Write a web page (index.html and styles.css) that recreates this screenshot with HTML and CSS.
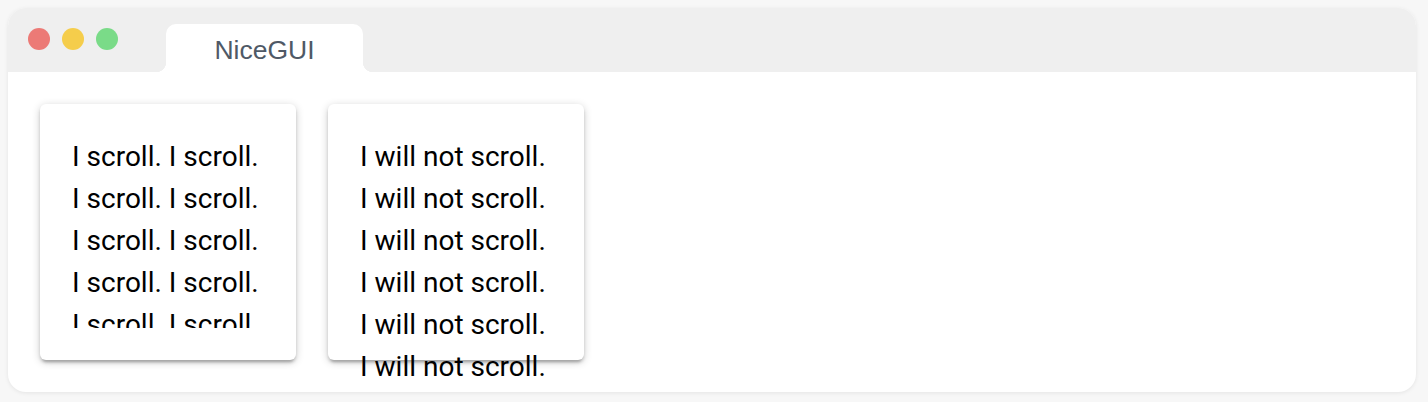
FILE: index.html
```html
<!DOCTYPE html>
<html>
<head>
<meta charset="utf-8">
<link rel="stylesheet" href="styles.css">
</head>
<body>
<div class="window">
  <div class="titlebar">
    <div class="dots">
      <span class="dot red"></span>
      <span class="dot yellow"></span>
      <span class="dot green"></span>
    </div>
    <div class="tab">NiceGUI</div>
  </div>
  <div class="content">
    <div class="card">
      <div class="scroll">
        <div class="line">I scroll. I scroll.</div>
        <div class="line">I scroll. I scroll.</div>
        <div class="line">I scroll. I scroll.</div>
        <div class="line">I scroll. I scroll.</div>
        <div class="line">I scroll. I scroll.</div>
        <div class="line">I scroll. I scroll.</div>
        <div class="line">I scroll. I scroll.</div>
        <div class="line">I scroll. I scroll.</div>
        <div class="line">I scroll. I scroll.</div>
        <div class="line">I scroll. I scroll.</div>
      </div>
    </div>
    <div class="card card-static">
      <div class="line">I will not scroll.</div>
      <div class="line">I will not scroll.</div>
      <div class="line">I will not scroll.</div>
      <div class="line">I will not scroll.</div>
      <div class="line">I will not scroll.</div>
      <div class="line">I will not scroll.</div>
    </div>
  </div>
</div>
</body>
</html>
```
FILE: styles.css
```css
html, body {
  margin: 0;
  padding: 0;
}
body {
  background: #f7f7f7;
  padding: 8px;
  font-family: Roboto, "Liberation Sans", sans-serif;
}
.window {
  width: 1408px;
  height: 384px;
  background: #ffffff;
  border-radius: 18px;
  box-shadow: 0 1px 4px rgba(0, 0, 0, 0.08);
  overflow: hidden;
}
.titlebar {
  height: 64px;
  background: #efefef;
  display: flex;
  align-items: flex-end;
}
.dots {
  display: flex;
  gap: 12px;
  align-self: flex-start;
  margin-top: 20px;
  margin-left: 20px;
}
.dot {
  width: 22px;
  height: 22px;
  border-radius: 50%;
  display: block;
}
.red { background: #ec7a76; }
.yellow { background: #f5cd4b; }
.green { background: #7adb88; }
.tab {
  position: relative;
  margin-left: 48px;
  width: 197px;
  height: 48px;
  background: #ffffff;
  border-radius: 10px 10px 0 0;
  display: flex;
  align-items: center;
  justify-content: center;
  padding-top: 5px;
  box-sizing: border-box;
  font-family: "Liberation Sans", Arial, sans-serif;
  font-size: 26.5px;
  color: #4f5966;
}
.tab::before,
.tab::after {
  content: "";
  position: absolute;
  bottom: 0;
  width: 10px;
  height: 10px;
}
.tab::before {
  left: -10px;
  background: radial-gradient(circle at 0 0, transparent 10px, #ffffff 10.5px);
}
.tab::after {
  right: -10px;
  background: radial-gradient(circle at 100% 0, transparent 10px, #ffffff 10.5px);
}
.content {
  display: flex;
  gap: 32px;
  padding: 32px;
  align-items: flex-start;
}
.card {
  width: 256px;
  height: 256px;
  box-sizing: border-box;
  padding: 32px;
  background: #ffffff;
  border-radius: 6px;
  box-shadow: 0 2px 8px rgba(0, 0, 0, 0.2), 0 3px 3px rgba(0, 0, 0, 0.14), 0 5px 2px -3px rgba(0, 0, 0, 0.12);
  color: #000000;
  font-size: 28px;
  line-height: 42px;
}
.scroll {
  height: 192px;
  overflow: hidden;
}
.card-static {
  overflow: visible;
}
.line {
  white-space: nowrap;
}
```
